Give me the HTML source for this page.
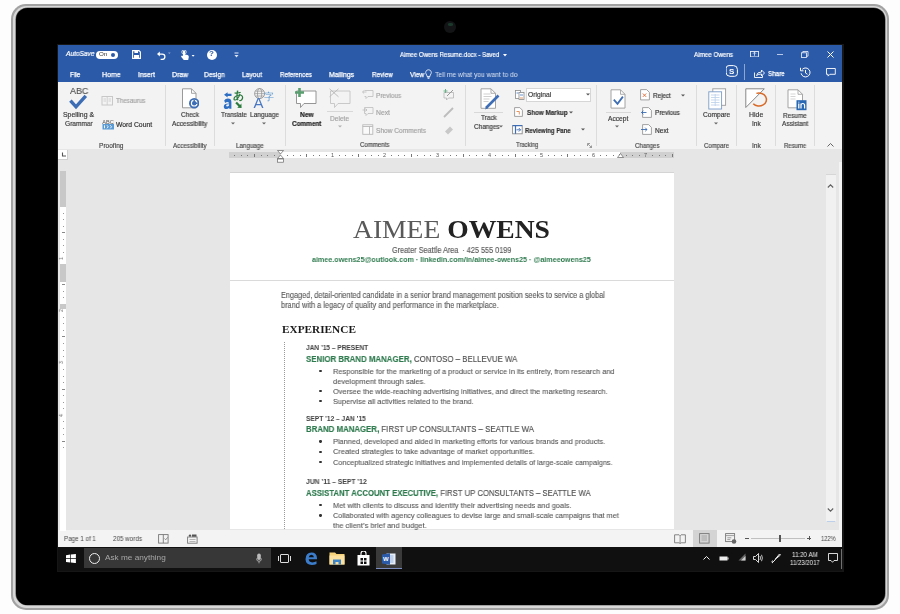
<!DOCTYPE html>
<html><head><meta charset="utf-8">
<style>
*{margin:0;padding:0;box-sizing:border-box}
html,body{width:900px;height:614px;overflow:hidden;background:#fdfdfd;font-family:"Liberation Sans",sans-serif}
.a{position:absolute}
.t{position:absolute;white-space:nowrap;line-height:1;will-change:transform}
b{font-weight:bold}
#frame{left:11.4px;top:3.9px;width:877.8px;height:605.7px;border-radius:15px;background:#a2a2a2}
#frame2{left:13.3px;top:5.5px;width:873.9px;height:602px;border-radius:13.5px;background:#d8d8d8}
#bezel{left:16px;top:7.5px;width:869px;height:597.8px;border-radius:11.5px;background:#000;box-shadow:0 0 0 0.6px #6a6a6a}
#screen{left:57px;top:44px;width:787px;height:528px;background:#161616}
#scr{left:58px;top:45px;width:784px;height:526px;overflow:hidden;background:#e6e6e6}
#w{left:-58px;top:-45px;width:900px;height:614px}
</style></head><body>
<div id="frame" class="a"></div>
<div id="frame2" class="a"></div>
<div id="bezel" class="a"></div>
<div class="a" style="left:444px;top:20.6px;width:12px;height:12px;border-radius:50%;background:#121416"></div><div class="a" style="left:448px;top:23.2px;width:4.5px;height:2.6px;border-radius:50%;background:#1c3a2c"></div>
<div id="screen" class="a"></div>
<div id="scr" class="a"><div id="w" class="a">
<div class="a" style="left:58px;top:45px;width:784px;height:37px;background:#2b5aa8"></div>
<div class="a" style="left:58px;top:82px;width:784px;height:67px;background:#f3f3f3"></div>
<div class="a" style="left:229.5px;top:172px;width:444px;height:357px;background:#fff"></div>
<div class="a" style="left:58px;top:529.5px;width:784px;height:17.5px;background:#f3f3f3"></div>
<div class="t" id="k17baa34a37" style="left:65.60px;top:51.46px;font-size:6.8px;color:#fff;font-style:italic;-webkit-text-stroke:0.2px #fff;transform:scaleX(0.9659);transform-origin:0 0;">AutoSave</div>
<div class="a" style="left:96px;top:50.5px;width:21.5px;height:8.5px;border-radius:4.5px;background:#fff"></div>
<div class="t" style="left:99.30px;top:51.48px;font-size:6.2px;color:#333;">On</div>
<div class="a" style="left:110.5px;top:52.5px;width:4.5px;height:4.5px;border-radius:50%;background:#2b5aa8"></div>
<svg class="a" style="left:131.5px;top:50px" width="9" height="9" viewBox="0 0 9 9"><path d="M0.6 0.6h6.4l1.4 1.4v6.4h-7.8z" fill="none" stroke="#fff" stroke-width="1.1"/><rect x="2.4" y="0.6" width="3.6" height="2.4" fill="#fff"/><rect x="2" y="5" width="5" height="3.4" fill="#fff"/></svg>
<svg class="a" style="left:157.2px;top:50.5px" width="14" height="9" viewBox="0 0 14 9"><path d="M2 3h3.2a2.7 2.7 0 0 1 0 5.4h-1.6" fill="none" stroke="#fff" stroke-width="1.25"/><path d="M0 3l2.8-2.6v5.2z" fill="#fff"/><path d="M11 1.6h2.6l-1.3 1.4z" fill="#8fa5d0"/></svg>
<svg class="a" style="left:180.2px;top:49.5px" width="16" height="11" viewBox="0 0 16 11"><path d="M3 5.5v-4a1 1 0 0 1 2 0v3l2.5 0.5q1.5 0.4 1.3 2l-0.6 3h-4.4l-2.5-3a0.9 0.9 0 0 1 1.5-1z" fill="#fff"/><circle cx="4" cy="2" r="2.2" fill="none" stroke="#fff" stroke-width="0.8"/><path d="M11.6 5.1h3l-1.5 1.6z" fill="#fff"/></svg>
<div class="a" style="left:206.5px;top:49.5px;width:10px;height:10px;border-radius:50%;background:#fff"></div>
<div class="t" style="left:209.20px;top:50.44px;font-size:8px;color:#2b5aa8;font-weight:bold;">?</div>
<svg class="a" style="left:233.5px;top:51.5px" width="5" height="6" viewBox="0 0 5 6"><rect x="0.5" y="0.5" width="4" height="1" fill="#dfe6f3"/><path d="M0.5 3h4l-2 2.5z" fill="#dfe6f3"/></svg>
<div class="t" id="k7e3c73c099" style="left:400.40px;top:51.36px;font-size:7.0px;color:#fff;-webkit-text-stroke:0.2px #fff;transform:scaleX(0.8681);transform-origin:0 0;">Aimee Owens Resume.docx  -  Saved</div>
<svg class="a" style="left:502.5px;top:53.5px" width="4" height="3" viewBox="0 0 4 3"><path d="M0 0h4l-2 2.5z" fill="#fff"/></svg>
<div class="t" id="kad0815792b" style="left:694.20px;top:51.36px;font-size:7.0px;color:#fff;-webkit-text-stroke:0.2px #fff;transform:scaleX(0.8949);transform-origin:0 0;">Aimee Owens</div>
<svg class="a" style="left:750.2px;top:50.8px" width="9" height="6.5" viewBox="0 0 9 6.5"><rect x="0.5" y="0.5" width="8" height="5.4" fill="none" stroke="#e8eef8" stroke-width="0.9"/><path d="M4.5 1.2v3.6M3 2.7l1.5-1.5 1.5 1.5" fill="none" stroke="#e8eef8" stroke-width="0.8"/></svg>
<div class="a" style="left:777px;top:53.8px;width:6px;height:1px;background:#b9c8e6"></div>
<svg class="a" style="left:801px;top:50.8px" width="7.5" height="7" viewBox="0 0 7.5 7"><rect x="0.5" y="1.8" width="5" height="4.7" fill="none" stroke="#e8eef8" stroke-width="0.85"/><path d="M1.8 1.8V0.5h5.2v4.7H5.5" fill="none" stroke="#e8eef8" stroke-width="0.85"/></svg>
<svg class="a" style="left:826.6px;top:50.6px" width="7" height="7" viewBox="0 0 7 7"><path d="M0.5 0.5l6 6M6.5 0.5l-6 6" stroke="#fff" stroke-width="1"/></svg>
<div class="t" id="kd5f7c191c1" style="left:70.20px;top:71.26px;font-size:7.2px;color:#fff;-webkit-text-stroke:0.25px #fff;transform:scaleX(0.8901);transform-origin:0 0;">File</div>
<div class="t" id="kb1c1edc522" style="left:102.00px;top:71.26px;font-size:7.2px;color:#fff;-webkit-text-stroke:0.25px #fff;transform:scaleX(0.9652);transform-origin:0 0;">Home</div>
<div class="t" id="k7739096b80" style="left:137.80px;top:71.26px;font-size:7.2px;color:#fff;-webkit-text-stroke:0.25px #fff;transform:scaleX(0.9408);transform-origin:0 0;">Insert</div>
<div class="t" id="k670a284139" style="left:171.80px;top:71.26px;font-size:7.2px;color:#fff;-webkit-text-stroke:0.25px #fff;transform:scaleX(0.9666);transform-origin:0 0;">Draw</div>
<div class="t" id="k342af5a0dd" style="left:204.00px;top:71.26px;font-size:7.2px;color:#fff;-webkit-text-stroke:0.25px #fff;transform:scaleX(0.9260);transform-origin:0 0;">Design</div>
<div class="t" id="ke1cec59cc8" style="left:242.20px;top:71.26px;font-size:7.2px;color:#fff;-webkit-text-stroke:0.25px #fff;transform:scaleX(0.9318);transform-origin:0 0;">Layout</div>
<div class="t" id="kd6c56615b6" style="left:280.00px;top:71.26px;font-size:7.2px;color:#fff;-webkit-text-stroke:0.25px #fff;transform:scaleX(0.8655);transform-origin:0 0;">References</div>
<div class="t" id="k54fa52f162" style="left:328.90px;top:71.26px;font-size:7.2px;color:#fff;-webkit-text-stroke:0.25px #fff;transform:scaleX(0.9524);transform-origin:0 0;">Mailings</div>
<div class="t" id="k63bd0ff7be" style="left:371.60px;top:71.26px;font-size:7.2px;color:#fff;-webkit-text-stroke:0.25px #fff;transform:scaleX(0.8788);transform-origin:0 0;">Review</div>
<div class="t" id="k5682ebab44" style="left:409.60px;top:71.26px;font-size:7.2px;color:#fff;-webkit-text-stroke:0.25px #fff;transform:scaleX(0.9137);transform-origin:0 0;">View</div>
<svg class="a" style="left:425px;top:68.5px" width="7" height="10" viewBox="0 0 7 10"><path d="M2 7.5q0-1.5-1-2.7a2.8 2.8 0 1 1 5 0q-1 1.2-1 2.7z" fill="none" stroke="#fff" stroke-width="0.8"/><path d="M2.3 8.6h2.4M2.6 9.5h1.8" stroke="#fff" stroke-width="0.7"/></svg>
<div class="t" id="kdb8320c83a" style="left:435.00px;top:71.26px;font-size:7.2px;color:#dbe3f1;transform:scaleX(0.9292);transform-origin:0 0;">Tell me what you want to do</div>
<svg class="a" style="left:726.4px;top:65.2px" width="12" height="12" viewBox="0 0 12 12"><path d="M3 0.6h4.5a3.9 3.9 0 0 1 3.9 3.9v4a2.8 2.8 0 0 1-2.8 2.8h-4.6a3.9 3.9 0 0 1-3.9-3.9v-4a2.8 2.8 0 0 1 2.9-2.8z" fill="none" stroke="#fff" stroke-width="1"/><text x="3.1" y="9.1" font-size="8" font-family="Liberation Sans" font-weight="bold" fill="#fff">S</text></svg>
<div class="a" style="left:744px;top:64px;width:1px;height:16px;background:#8ea6d2"></div>
<svg class="a" style="left:754px;top:68.5px" width="11" height="9" viewBox="0 0 11 9"><path d="M0.5 3.5v5h8v-2" fill="none" stroke="#fff" stroke-width="0.9"/><path d="M2.5 6.5q0.5-3.5 5-3.5v-2l3 3-3 3v-2q-3 0-5 1.5z" fill="none" stroke="#fff" stroke-width="0.9"/></svg>
<div class="t" id="k57a375aeab" style="left:767.70px;top:69.75px;font-size:7.4px;color:#fff;-webkit-text-stroke:0.25px #fff;transform:scaleX(0.8483);transform-origin:0 0;">Share</div>
<svg class="a" style="left:799.8px;top:67.2px" width="11" height="11" viewBox="0 0 11 11"><path d="M2.3 2.3a4.5 4.5 0 1 1-1.2 4" fill="none" stroke="#fff" stroke-width="1"/><path d="M0.5 0.8v3h3" fill="none" stroke="#fff" stroke-width="1"/><path d="M5.5 3v3l2 1.3" fill="none" stroke="#fff" stroke-width="1"/></svg>
<svg class="a" style="left:825.6px;top:67.6px" width="10" height="9" viewBox="0 0 10 9"><path d="M0.5 0.5h8.8v5.8h-5.4l-1.8 1.8v-1.8h-1.6z" fill="none" stroke="#fff" stroke-width="0.9"/></svg>
<div class="a" style="left:165.0px;top:85px;width:1px;height:61px;background:#dcdcdc"></div>
<div class="a" style="left:214.0px;top:85px;width:1px;height:61px;background:#dcdcdc"></div>
<div class="a" style="left:285.0px;top:85px;width:1px;height:61px;background:#dcdcdc"></div>
<div class="a" style="left:465.0px;top:85px;width:1px;height:61px;background:#dcdcdc"></div>
<div class="a" style="left:596.0px;top:85px;width:1px;height:61px;background:#dcdcdc"></div>
<div class="a" style="left:696.0px;top:85px;width:1px;height:61px;background:#dcdcdc"></div>
<div class="a" style="left:736.0px;top:85px;width:1px;height:61px;background:#dcdcdc"></div>
<div class="a" style="left:775.0px;top:85px;width:1px;height:61px;background:#dcdcdc"></div>
<div class="a" style="left:814.0px;top:85px;width:1px;height:61px;background:#dcdcdc"></div>
<div class="t" id="k8417831901" style="left:69.70px;top:87.42px;font-size:9.2px;color:#555;-webkit-text-stroke:0.18px #555;transform:scaleX(0.9690);transform-origin:0 0;">ABC</div>
<svg class="a" style="left:68px;top:94px" width="20" height="16" viewBox="0 0 20 16"><path d="M2.4 6.6l5.6 6.2 9.8-11" fill="none" stroke="#3d6db4" stroke-width="3.4" stroke-linejoin="miter"/></svg>
<div class="t" id="k8f213a7225" style="left:63.10px;top:112.27px;font-size:6.6px;color:#3c3c3c;-webkit-text-stroke:0.18px #3c3c3c;transform:scaleX(1.0457);transform-origin:0 0;">Spelling &amp;</div>
<div class="t" id="k9bbdb61a5f" style="left:65.00px;top:120.87px;font-size:6.6px;color:#3c3c3c;-webkit-text-stroke:0.18px #3c3c3c;transform:scaleX(0.9898);transform-origin:0 0;">Grammar</div>
<svg class="a" style="left:101px;top:94.5px" width="13" height="11" viewBox="0 0 13 11"><rect x="1" y="1.5" width="10.5" height="8.5" fill="none" stroke="#c8c8c8" stroke-width="1"/><path d="M6.2 1.5v8.5M2.5 4h2.5M2.5 6h2.5M7.5 4h2.5M7.5 6h2.5" stroke="#c8c8c8" stroke-width="0.8"/></svg>
<div class="t" id="kcfb2d3cc26" style="left:116.00px;top:98.47px;font-size:6.6px;color:#a4a4a4;-webkit-text-stroke:0.18px #a4a4a4;transform:scaleX(0.9456);transform-origin:0 0;">Thesaurus</div>
<svg class="a" style="left:101.5px;top:118px" width="13" height="12" viewBox="0 0 13 12"><text x="0.3" y="5.5" font-family="Liberation Sans" font-size="5.6" fill="#555">ABC</text><rect x="0.5" y="6" width="11.5" height="5.5" fill="#5b9bd5"/><path d="M2.5 7.3v3M5 7.3l1.2 1.5-1.2 1.5M8.3 7.3l1.2 1.5-1.2 1.5" fill="none" stroke="#fff" stroke-width="0.9"/></svg>
<div class="t" id="k4f58f2799f" style="left:115.50px;top:121.97px;font-size:6.6px;color:#333;-webkit-text-stroke:0.18px #333;transform:scaleX(1.0284);transform-origin:0 0;">Word Count</div>
<div class="t" id="kff6e57d329" style="left:99.00px;top:142.57px;font-size:6.4px;color:#4c4c4c;-webkit-text-stroke:0.18px #4c4c4c;transform:scaleX(1.0264);transform-origin:0 0;">Proofing</div>
<svg class="a" style="left:181px;top:88px" width="18" height="21" viewBox="0 0 18 21"><path d="M1.5 0.8h9l4.5 4.5v14.5h-13.5z" fill="#fff" stroke="#9a9a9a" stroke-width="1"/><path d="M10.5 0.8v4.5h4.5" fill="none" stroke="#9a9a9a" stroke-width="0.9"/><circle cx="13.2" cy="15.2" r="5.2" fill="#3d6db4"/><circle cx="13.2" cy="15.2" r="2.8" fill="none" stroke="#fff" stroke-width="1.1"/><path d="M13.2 11.8v3.4h3.4" fill="none" stroke="#3d6db4" stroke-width="1.4"/></svg>
<div class="t" id="k403319f1ce" style="left:181.00px;top:112.47px;font-size:6.6px;color:#3c3c3c;-webkit-text-stroke:0.18px #3c3c3c;transform:scaleX(0.9603);transform-origin:0 0;">Check</div>
<div class="t" id="kd3f88de8da" style="left:172.30px;top:121.27px;font-size:6.6px;color:#3c3c3c;-webkit-text-stroke:0.18px #3c3c3c;transform:scaleX(0.9844);transform-origin:0 0;">Accessibility</div>
<div class="t" id="ke215ae397a" style="left:173.00px;top:142.57px;font-size:6.4px;color:#4c4c4c;-webkit-text-stroke:0.18px #4c4c4c;transform:scaleX(0.9663);transform-origin:0 0;">Accessibility</div>
<svg class="a" style="left:223px;top:87.5px" width="21" height="22" viewBox="0 0 21 22"><path d="M1 6.8l3.6-2.6v1.6h3.9v2.2h-3.9v1.6z" fill="#2e6fc4"/><path d="M1.2 12.6q1.2-2 3.6-2 3.6 0 3.6 3.4v6.8h-2.2v-1q-1 1.3-2.8 1.3-2.6 0-2.6-2.6 0-3 4.6-3h0.8q0-1.5-1.7-1.5-1.3 0-2.4 0.9z M6.2 16.2h-0.8q-2.3 0-2.3 1.3 0 1 1.1 1 2 0 2-2.3z" fill="#2e6fc4" fill-rule="evenodd"/><text x="9.8" y="11" font-family="Liberation Sans" font-size="11" font-weight="bold" fill="#2a7a3e">&#12354;</text><path d="M18.6 20l-4.4-0.2 1.3-1.3-3.2-3.2 1.6-1.6 3.2 3.2 1.3-1.3z" fill="#2a7a3e"/></svg>
<div class="t" id="k620f335fba" style="left:220.70px;top:112.47px;font-size:6.6px;color:#3c3c3c;-webkit-text-stroke:0.18px #3c3c3c;transform:scaleX(0.9527);transform-origin:0 0;">Translate</div>
<svg class="a" style="left:231.4px;top:121.9px" width="4" height="3" viewBox="0 0 4 3"><path d="M0 0.5h4l-2 2z" fill="#666"/></svg>
<svg class="a" style="left:252px;top:88px" width="23" height="21" viewBox="0 0 23 21"><circle cx="7.6" cy="5.6" r="5" fill="none" stroke="#8a8a8a" stroke-width="0.8"/><ellipse cx="7.6" cy="5.6" rx="2.1" ry="5" fill="none" stroke="#8a8a8a" stroke-width="0.7"/><path d="M2.6 5.6h10M3.4 3.2h8.4M3.4 8h8.4" stroke="#8a8a8a" stroke-width="0.6"/><text x="1.6" y="19.6" font-family="Liberation Sans" font-size="15" fill="#4a78c4">A</text><text x="12.2" y="12" font-family="Liberation Sans" font-size="9.5" fill="#5b96d0">&#23383;</text></svg>
<div class="t" id="k5fb23977b5" style="left:249.90px;top:112.47px;font-size:6.6px;color:#3c3c3c;-webkit-text-stroke:0.18px #3c3c3c;transform:scaleX(0.9869);transform-origin:0 0;">Language</div>
<svg class="a" style="left:262px;top:121.9px" width="4" height="3" viewBox="0 0 4 3"><path d="M0 0.5h4l-2 2z" fill="#666"/></svg>
<div class="t" id="kfef24a5581" style="left:235.90px;top:142.57px;font-size:6.4px;color:#4c4c4c;-webkit-text-stroke:0.18px #4c4c4c;transform:scaleX(0.9720);transform-origin:0 0;">Language</div>
<svg class="a" style="left:295px;top:88px" width="24" height="21" viewBox="0 0 24 21"><path d="M1.5 3h19.5v12.5h-12l-3.5 4v-4h-4z" fill="#fff" stroke="#8a8a8a" stroke-width="0.9"/><path d="M4.5 0v9M0 4.5h9" stroke="#5a9e70" stroke-width="2.6"/></svg>
<div class="t" id="k3a620e6601" style="left:300.00px;top:112.36px;font-size:6.8px;color:#222;font-weight:bold;-webkit-text-stroke:0.18px #222;transform:scaleX(0.9639);transform-origin:0 0;">New</div>
<div class="t" id="k99bf45391f" style="left:291.90px;top:120.96px;font-size:6.8px;color:#222;font-weight:bold;-webkit-text-stroke:0.18px #222;transform:scaleX(0.9373);transform-origin:0 0;">Comment</div>
<svg class="a" style="left:327.5px;top:87.5px" width="24" height="21" viewBox="0 0 24 21"><path d="M2.5 3h19.5v12.5h-12l-3.5 4v-4h-4z" fill="none" stroke="#c4c4c4" stroke-width="0.9"/><path d="M1.5 0.8l9 8M10.5 0.8l-9 8" stroke="#b8b8b8" stroke-width="0.9"/></svg>
<div class="a" style="left:327px;top:111px;width:26px;height:1px;background:#d8d8d8"></div>
<div class="t" id="k73fb4159eb" style="left:330.00px;top:115.67px;font-size:6.6px;color:#a4a4a4;-webkit-text-stroke:0.18px #a4a4a4;transform:scaleX(0.9946);transform-origin:0 0;">Delete</div>
<svg class="a" style="left:338px;top:124.9px" width="4" height="3" viewBox="0 0 4 3"><path d="M0 0.5h4l-2 2z" fill="#b0b0b0"/></svg>
<svg class="a" style="left:362px;top:88.5px" width="12" height="11" viewBox="0 0 12 11"><path d="M2.5 1.5h8.5v6h-5l-2 2v-2h-1.5" fill="none" stroke="#bdbdbd" stroke-width="0.8"/><path d="M0.5 3h4M0.5 3l1.6-1.5M0.5 3l1.6 1.5" fill="none" stroke="#bdbdbd" stroke-width="0.8"/></svg>
<div class="t" id="k29019f56ca" style="left:375.70px;top:92.67px;font-size:6.6px;color:#a4a4a4;-webkit-text-stroke:0.18px #a4a4a4;transform:scaleX(0.9846);transform-origin:0 0;">Previous</div>
<svg class="a" style="left:362px;top:106px" width="12" height="11" viewBox="0 0 12 11"><path d="M2.5 1.5h8.5v6h-5l-2 2v-2h-1.5v-6" fill="none" stroke="#bdbdbd" stroke-width="0.8"/><path d="M0.5 4h4.5M5 4l-1.6-1.5M5 4l-1.6 1.5" fill="none" stroke="#bdbdbd" stroke-width="0.8"/></svg>
<div class="t" id="k5f182f436b" style="left:375.70px;top:110.27px;font-size:6.6px;color:#a4a4a4;-webkit-text-stroke:0.18px #a4a4a4;transform:scaleX(1.0293);transform-origin:0 0;">Next</div>
<svg class="a" style="left:362px;top:124px" width="12" height="11" viewBox="0 0 12 11"><rect x="0.8" y="0.8" width="10" height="9.5" fill="#fafafa" stroke="#b8b8b8" stroke-width="0.9"/><path d="M0.8 2.5h10M7.5 2.5v7.8" stroke="#b8b8b8" stroke-width="0.9"/></svg>
<div class="t" id="ke1823c9a7a" style="left:375.70px;top:127.67px;font-size:6.6px;color:#a4a4a4;-webkit-text-stroke:0.18px #a4a4a4;transform:scaleX(0.9948);transform-origin:0 0;">Show Comments</div>
<svg class="a" style="left:442.5px;top:88.5px" width="12" height="11" viewBox="0 0 12 11"><path d="M1 3.5h9.5v5.5h-5l-2 2v-2h-2.5z" fill="none" stroke="#b4b4b4" stroke-width="0.8"/><path d="M4 7l6-6" stroke="#999" stroke-width="1"/><path d="M2.5 0v4M0.5 2h4" stroke="#6fb08a" stroke-width="1"/></svg>
<svg class="a" style="left:443px;top:106.5px" width="11" height="11" viewBox="0 0 11 11"><path d="M1 10l9-9" stroke="#bdbdbd" stroke-width="1.8"/></svg>
<svg class="a" style="left:443.5px;top:124.5px" width="10" height="10" viewBox="0 0 10 10"><path d="M1 6.5l5-5 3 3-5 5z" fill="#c8c8c8"/></svg>
<div class="t" id="k11de3ec9b0" style="left:360.30px;top:142.37px;font-size:6.4px;color:#4c4c4c;-webkit-text-stroke:0.18px #4c4c4c;transform:scaleX(0.9493);transform-origin:0 0;">Comments</div>
<svg class="a" style="left:480px;top:88px" width="20" height="22" viewBox="0 0 20 22"><path d="M1 0.8h10l4.5 4.5v15h-14.5z" fill="#fff" stroke="#9a9a9a" stroke-width="0.9"/><path d="M11 0.8v4.5h4.5" fill="none" stroke="#9a9a9a" stroke-width="0.8"/><path d="M3.5 6h7M3.5 8.5h8M3.5 11h6M3.5 13.5h5" stroke="#c9c9c9" stroke-width="0.9"/><path d="M6 20l12.5-12.5" stroke="#3d6db4" stroke-width="2.6"/><path d="M5 21.5l1.2-2.8 1.6 1.6z" fill="#3d6db4"/></svg>
<div class="a" style="left:474px;top:112px;width:29px;height:1px;background:#d8d8d8"></div>
<div class="t" id="kb297d44549" style="left:480.70px;top:115.47px;font-size:6.6px;color:#3c3c3c;-webkit-text-stroke:0.18px #3c3c3c;transform:scaleX(0.9637);transform-origin:0 0;">Track</div>
<div class="t" id="ka92f11b8d6" style="left:473.70px;top:124.17px;font-size:6.6px;color:#3c3c3c;-webkit-text-stroke:0.18px #3c3c3c;transform:scaleX(0.9717);transform-origin:0 0;">Changes</div>
<svg class="a" style="left:499.4px;top:125.1px" width="4" height="3" viewBox="0 0 4 3"><path d="M0 0.5h4l-2 2z" fill="#666"/></svg>
<svg class="a" style="left:514.5px;top:89.5px" width="10" height="10" viewBox="0 0 10 10"><rect x="0.5" y="0.5" width="5" height="8" fill="#fff" stroke="#8a8a8a" stroke-width="0.8"/><rect x="4" y="2.5" width="5" height="7" fill="#fff" stroke="#8a8a8a" stroke-width="0.8"/><path d="M1.5 3h2M5 5h3" stroke="#3d78c8" stroke-width="0.8"/><path d="M5 8h3" stroke="#e07b39" stroke-width="0.8"/></svg>
<div class="a" style="left:525.5px;top:87.7px;width:65.5px;height:14.5px;background:#fff;border:1px solid #d6d6d6"></div>
<div class="t" id="ke499ab6061" style="left:527.70px;top:92.27px;font-size:6.6px;color:#3c3c3c;-webkit-text-stroke:0.18px #3c3c3c;transform:scaleX(1.0187);transform-origin:0 0;">Original</div>
<svg class="a" style="left:586px;top:93.1px" width="4" height="3" viewBox="0 0 4 3"><path d="M0 0.5h4l-2 2z" fill="#555"/></svg>
<svg class="a" style="left:514px;top:107px" width="9" height="10" viewBox="0 0 9 10"><path d="M0.6 0.6h5.2l2.6 2.6v6.2h-7.8z" fill="#fff" stroke="#8a8a8a" stroke-width="0.8"/><path d="M2.5 4.5h2.8v3" fill="none" stroke="#e07b39" stroke-width="0.8"/></svg>
<div class="t" id="kae79322226" style="left:526.50px;top:110.27px;font-size:6.6px;color:#333;font-weight:bold;-webkit-text-stroke:0.18px #333;transform:scaleX(0.9507);transform-origin:0 0;">Show Markup</div>
<svg class="a" style="left:568.8px;top:111.1px" width="4" height="3" viewBox="0 0 4 3"><path d="M0 0.5h4l-2 2z" fill="#555"/></svg>
<svg class="a" style="left:511.5px;top:125px" width="11" height="9.5" viewBox="0 0 11 9.5"><rect x="0.6" y="0.6" width="9.6" height="8.2" fill="#fff" stroke="#8a8a8a" stroke-width="0.9"/><path d="M3.5 0.6v8.2" stroke="#3d6db4" stroke-width="1.2"/><path d="M0.6 0.6h9.6" stroke="#3d6db4" stroke-width="1.2"/><path d="M4.5 4.8h4M6.8 3l1.8 1.8-1.8 1.8" fill="none" stroke="#3d6db4" stroke-width="0.9"/></svg>
<div class="t" id="k16afb42cae" style="left:525.00px;top:127.57px;font-size:6.6px;color:#333;font-weight:bold;-webkit-text-stroke:0.18px #333;transform:scaleX(0.9092);transform-origin:0 0;">Reviewing Pane</div>
<svg class="a" style="left:581.4px;top:128.3px" width="4" height="3" viewBox="0 0 4 3"><path d="M0 0.5h4l-2 2z" fill="#555"/></svg>
<div class="t" id="k72ea05d9f2" style="left:516.00px;top:142.37px;font-size:6.4px;color:#4c4c4c;-webkit-text-stroke:0.18px #4c4c4c;transform:scaleX(0.9201);transform-origin:0 0;">Tracking</div>
<svg class="a" style="left:587px;top:142.5px" width="5" height="5" viewBox="0 0 5 5"><path d="M0.5 0.5h2.5M0.5 0.5v2.5M1 1l3.5 3.5M4.5 2.5v2h-2" fill="none" stroke="#777" stroke-width="0.7"/></svg>
<svg class="a" style="left:610px;top:88.5px" width="16" height="20" viewBox="0 0 16 20"><path d="M1 0.8h9.5l4.5 4.5v13.8h-14z" fill="#fff" stroke="#9a9a9a" stroke-width="0.9"/><path d="M10.5 0.8v4.5h4.5" fill="none" stroke="#9a9a9a" stroke-width="0.8"/><path d="M3.8 10.6l3.7 4.2 5.4-7.2" fill="none" stroke="#3d6db4" stroke-width="1.8"/></svg>
<div class="a" style="left:606px;top:111.5px;width:24.5px;height:1px;background:#d8d8d8"></div>
<div class="t" id="k4cea4e61a1" style="left:607.80px;top:115.87px;font-size:6.6px;color:#3c3c3c;-webkit-text-stroke:0.18px #3c3c3c;transform:scaleX(1.0044);transform-origin:0 0;">Accept</div>
<svg class="a" style="left:615.4px;top:125.1px" width="4" height="3" viewBox="0 0 4 3"><path d="M0 0.5h4l-2 2z" fill="#666"/></svg>
<svg class="a" style="left:639.5px;top:89px" width="10" height="11.5" viewBox="0 0 10 11.5"><path d="M0.6 0.6h6l2.8 2.8v7.5h-8.8z" fill="#fff" stroke="#8a8a8a" stroke-width="0.8"/><path d="M2.8 4.5l3.4 3.4M6.2 4.5l-3.4 3.4" stroke="#e0632b" stroke-width="0.9"/></svg>
<div class="t" id="kca6874fea9" style="left:653.00px;top:92.67px;font-size:6.6px;color:#333;-webkit-text-stroke:0.18px #333;transform:scaleX(0.9549);transform-origin:0 0;">Reject</div>
<svg class="a" style="left:681px;top:93.7px" width="4" height="3" viewBox="0 0 4 3"><path d="M0 0.5h4l-2 2z" fill="#555"/></svg>
<svg class="a" style="left:641px;top:106.5px" width="11" height="11" viewBox="0 0 11 11"><path d="M1.6 0.6h6l2.8 2.8v7h-8.8z" fill="#fff" stroke="#8a8a8a" stroke-width="0.8"/><path d="M0.5 5.5h5M0.5 5.5l1.8-1.8M0.5 5.5l1.8 1.8" fill="none" stroke="#3d6db4" stroke-width="0.9"/></svg>
<div class="t" id="k590ff5d0f3" style="left:654.90px;top:110.17px;font-size:6.6px;color:#333;-webkit-text-stroke:0.18px #333;transform:scaleX(0.9690);transform-origin:0 0;">Previous</div>
<svg class="a" style="left:641px;top:124px" width="11" height="11" viewBox="0 0 11 11"><path d="M1.6 0.6h6l2.8 2.8v7h-8.8z" fill="#fff" stroke="#8a8a8a" stroke-width="0.8"/><path d="M0 5.5h6M6 5.5l-1.8-1.8M6 5.5l-1.8 1.8" fill="none" stroke="#3d6db4" stroke-width="0.9"/></svg>
<div class="t" id="kedcf47a56c" style="left:654.90px;top:127.57px;font-size:6.6px;color:#333;-webkit-text-stroke:0.18px #333;transform:scaleX(0.9924);transform-origin:0 0;">Next</div>
<div class="t" id="kad9bd24872" style="left:634.70px;top:142.57px;font-size:6.4px;color:#4c4c4c;-webkit-text-stroke:0.18px #4c4c4c;transform:scaleX(0.9588);transform-origin:0 0;">Changes</div>
<svg class="a" style="left:707.5px;top:87.5px" width="19" height="22" viewBox="0 0 19 22"><rect x="4.8" y="0.8" width="12.8" height="16.5" fill="#fff" stroke="#9a9a9a" stroke-width="0.9"/><rect x="0.8" y="3.8" width="12.8" height="17.2" fill="#fff" stroke="#7a9cc8" stroke-width="0.9"/><path d="M3 7h8.5M3 9.5h8.5M3 12h8.5M3 14.5h8.5M3 17h8.5M7.2 6v12" stroke="#b9cfe8" stroke-width="0.8"/></svg>
<div class="t" id="k7209b320b9" style="left:703.00px;top:112.47px;font-size:6.6px;color:#3c3c3c;-webkit-text-stroke:0.18px #3c3c3c;transform:scaleX(1.0050);transform-origin:0 0;">Compare</div>
<svg class="a" style="left:714.3px;top:121.9px" width="4" height="3" viewBox="0 0 4 3"><path d="M0 0.5h4l-2 2z" fill="#666"/></svg>
<div class="t" id="ke14606fc5c" style="left:704.40px;top:142.57px;font-size:6.4px;color:#4c4c4c;-webkit-text-stroke:0.18px #4c4c4c;transform:scaleX(0.9522);transform-origin:0 0;">Compare</div>
<svg class="a" style="left:744.5px;top:88px" width="23" height="21" viewBox="0 0 23 21"><path d="M0.8 0.8h18.5l-18.5 18.7z" fill="#fff" stroke="#7a7a7a" stroke-width="0.9"/><path d="M11.4 5.4A7.5 6.5 0 1 1 8.25 15.7" fill="none" stroke="#d86a28" stroke-width="1.5"/></svg>
<div class="t" id="kb185ceb765" style="left:749.00px;top:112.47px;font-size:6.6px;color:#3c3c3c;-webkit-text-stroke:0.18px #3c3c3c;transform:scaleX(1.0514);transform-origin:0 0;">Hide</div>
<div class="t" id="k742c54b73b" style="left:752.00px;top:120.97px;font-size:6.6px;color:#3c3c3c;-webkit-text-stroke:0.18px #3c3c3c;transform:scaleX(0.9958);transform-origin:0 0;">Ink</div>
<div class="t" id="k70abf92c3a" style="left:752.20px;top:142.57px;font-size:6.4px;color:#4c4c4c;-webkit-text-stroke:0.18px #4c4c4c;transform:scaleX(1.0479);transform-origin:0 0;">Ink</div>
<svg class="a" style="left:786.5px;top:88.5px" width="21" height="22" viewBox="0 0 21 22"><path d="M1 0.8h10l4.5 4.5v13.5h-14.5z" fill="#fff" stroke="#9a9a9a" stroke-width="0.9"/><path d="M11 0.8v4.5h4.5" fill="none" stroke="#9a9a9a" stroke-width="0.8"/><path d="M3.5 5h5M3.5 7.5h5M3.5 10h5" stroke="#d0d0d0" stroke-width="0.9"/><rect x="9.5" y="11.2" width="10" height="10" fill="#2867b2"/><path d="M11.8 14.5v5M11.8 12.8v0.8" stroke="#fff" stroke-width="1.3"/><path d="M14 19.5v-5M14 16.5q0-2 1.8-2t1.8 2v3" fill="none" stroke="#fff" stroke-width="1.2"/></svg>
<div class="t" id="k8d5b5f9a8d" style="left:783.00px;top:112.67px;font-size:6.6px;color:#3c3c3c;-webkit-text-stroke:0.18px #3c3c3c;transform:scaleX(0.9633);transform-origin:0 0;">Resume</div>
<div class="t" id="kb6d0538533" style="left:781.60px;top:120.97px;font-size:6.6px;color:#3c3c3c;-webkit-text-stroke:0.18px #3c3c3c;transform:scaleX(0.9774);transform-origin:0 0;">Assistant</div>
<div class="t" id="k4aa9794260" style="left:783.80px;top:142.57px;font-size:6.4px;color:#4c4c4c;-webkit-text-stroke:0.18px #4c4c4c;transform:scaleX(0.9346);transform-origin:0 0;">Resume</div>
<svg class="a" style="left:827px;top:143px" width="7" height="4" viewBox="0 0 7 4"><path d="M0.5 3.5l3-3 3 3" fill="none" stroke="#555" stroke-width="0.9"/></svg>
<div class="a" style="left:58px;top:150px;width:10px;height:9.5px;background:#fff;border-right:1px solid #d0d0d0;border-bottom:1px solid #d0d0d0"></div>
<svg class="a" style="left:60.5px;top:151.5px" width="6" height="6" viewBox="0 0 6 6"><path d="M1.5 0.5v3.5h3.5" fill="none" stroke="#555" stroke-width="1.1"/></svg>
<div class="a" style="left:228.5px;top:152.3px;width:445px;height:5.4px;background:#d0d0d0"></div>
<div class="a" style="left:280.5px;top:152.3px;width:339px;height:5.4px;background:#fff"></div>
<div class="a" style="left:234.42px;top:154.6px;width:0.8px;height:0.9px;background:#777"></div><div class="a" style="left:240.95px;top:154.6px;width:0.8px;height:0.9px;background:#777"></div><div class="a" style="left:247.47px;top:154.6px;width:0.8px;height:0.9px;background:#777"></div><div class="a" style="left:254.00px;top:153.5px;width:0.8px;height:3px;background:#777"></div><div class="a" style="left:260.53px;top:154.6px;width:0.8px;height:0.9px;background:#777"></div><div class="a" style="left:267.05px;top:154.6px;width:0.8px;height:0.9px;background:#777"></div><div class="a" style="left:273.58px;top:154.6px;width:0.8px;height:0.9px;background:#777"></div><div class="a" style="left:286.62px;top:154.6px;width:0.8px;height:0.9px;background:#777"></div><div class="a" style="left:293.15px;top:154.6px;width:0.8px;height:0.9px;background:#777"></div><div class="a" style="left:299.68px;top:154.6px;width:0.8px;height:0.9px;background:#777"></div><div class="a" style="left:306.20px;top:153.5px;width:0.8px;height:3px;background:#777"></div><div class="a" style="left:312.73px;top:154.6px;width:0.8px;height:0.9px;background:#777"></div><div class="a" style="left:319.25px;top:154.6px;width:0.8px;height:0.9px;background:#777"></div><div class="a" style="left:325.78px;top:154.6px;width:0.8px;height:0.9px;background:#777"></div><div class="t" style="left:331.10px;top:152.6px;font-size:5.5px;color:#555">1</div><div class="a" style="left:338.83px;top:154.6px;width:0.8px;height:0.9px;background:#777"></div><div class="a" style="left:345.35px;top:154.6px;width:0.8px;height:0.9px;background:#777"></div><div class="a" style="left:351.88px;top:154.6px;width:0.8px;height:0.9px;background:#777"></div><div class="a" style="left:358.40px;top:153.5px;width:0.8px;height:3px;background:#777"></div><div class="a" style="left:364.93px;top:154.6px;width:0.8px;height:0.9px;background:#777"></div><div class="a" style="left:371.45px;top:154.6px;width:0.8px;height:0.9px;background:#777"></div><div class="a" style="left:377.98px;top:154.6px;width:0.8px;height:0.9px;background:#777"></div><div class="t" style="left:383.30px;top:152.6px;font-size:5.5px;color:#555">2</div><div class="a" style="left:391.03px;top:154.6px;width:0.8px;height:0.9px;background:#777"></div><div class="a" style="left:397.55px;top:154.6px;width:0.8px;height:0.9px;background:#777"></div><div class="a" style="left:404.08px;top:154.6px;width:0.8px;height:0.9px;background:#777"></div><div class="a" style="left:410.60px;top:153.5px;width:0.8px;height:3px;background:#777"></div><div class="a" style="left:417.12px;top:154.6px;width:0.8px;height:0.9px;background:#777"></div><div class="a" style="left:423.65px;top:154.6px;width:0.8px;height:0.9px;background:#777"></div><div class="a" style="left:430.18px;top:154.6px;width:0.8px;height:0.9px;background:#777"></div><div class="t" style="left:435.50px;top:152.6px;font-size:5.5px;color:#555">3</div><div class="a" style="left:443.23px;top:154.6px;width:0.8px;height:0.9px;background:#777"></div><div class="a" style="left:449.75px;top:154.6px;width:0.8px;height:0.9px;background:#777"></div><div class="a" style="left:456.28px;top:154.6px;width:0.8px;height:0.9px;background:#777"></div><div class="a" style="left:462.80px;top:153.5px;width:0.8px;height:3px;background:#777"></div><div class="a" style="left:469.33px;top:154.6px;width:0.8px;height:0.9px;background:#777"></div><div class="a" style="left:475.85px;top:154.6px;width:0.8px;height:0.9px;background:#777"></div><div class="a" style="left:482.38px;top:154.6px;width:0.8px;height:0.9px;background:#777"></div><div class="t" style="left:487.70px;top:152.6px;font-size:5.5px;color:#555">4</div><div class="a" style="left:495.43px;top:154.6px;width:0.8px;height:0.9px;background:#777"></div><div class="a" style="left:501.95px;top:154.6px;width:0.8px;height:0.9px;background:#777"></div><div class="a" style="left:508.48px;top:154.6px;width:0.8px;height:0.9px;background:#777"></div><div class="a" style="left:515.00px;top:153.5px;width:0.8px;height:3px;background:#777"></div><div class="a" style="left:521.52px;top:154.6px;width:0.8px;height:0.9px;background:#777"></div><div class="a" style="left:528.05px;top:154.6px;width:0.8px;height:0.9px;background:#777"></div><div class="a" style="left:534.58px;top:154.6px;width:0.8px;height:0.9px;background:#777"></div><div class="t" style="left:539.90px;top:152.6px;font-size:5.5px;color:#555">5</div><div class="a" style="left:547.63px;top:154.6px;width:0.8px;height:0.9px;background:#777"></div><div class="a" style="left:554.15px;top:154.6px;width:0.8px;height:0.9px;background:#777"></div><div class="a" style="left:560.68px;top:154.6px;width:0.8px;height:0.9px;background:#777"></div><div class="a" style="left:567.20px;top:153.5px;width:0.8px;height:3px;background:#777"></div><div class="a" style="left:573.73px;top:154.6px;width:0.8px;height:0.9px;background:#777"></div><div class="a" style="left:580.25px;top:154.6px;width:0.8px;height:0.9px;background:#777"></div><div class="a" style="left:586.77px;top:154.6px;width:0.8px;height:0.9px;background:#777"></div><div class="t" style="left:592.10px;top:152.6px;font-size:5.5px;color:#555">6</div><div class="a" style="left:599.83px;top:154.6px;width:0.8px;height:0.9px;background:#777"></div><div class="a" style="left:606.35px;top:154.6px;width:0.8px;height:0.9px;background:#777"></div><div class="a" style="left:612.88px;top:154.6px;width:0.8px;height:0.9px;background:#777"></div><div class="a" style="left:619.40px;top:153.5px;width:0.8px;height:3px;background:#777"></div><div class="a" style="left:625.93px;top:154.6px;width:0.8px;height:0.9px;background:#777"></div><div class="a" style="left:632.45px;top:154.6px;width:0.8px;height:0.9px;background:#777"></div><div class="a" style="left:638.98px;top:154.6px;width:0.8px;height:0.9px;background:#777"></div><div class="t" style="left:644.30px;top:152.6px;font-size:5.5px;color:#555">7</div><div class="a" style="left:652.02px;top:154.6px;width:0.8px;height:0.9px;background:#777"></div><div class="a" style="left:658.55px;top:154.6px;width:0.8px;height:0.9px;background:#777"></div><div class="a" style="left:665.08px;top:154.6px;width:0.8px;height:0.9px;background:#777"></div><div class="a" style="left:671.60px;top:153.5px;width:0.8px;height:3px;background:#777"></div>
<svg class="a" style="left:277px;top:149.5px" width="7" height="13" viewBox="0 0 7 13"><path d="M0.5 0.5h6l-3 3.5z" fill="#fff" stroke="#666" stroke-width="0.7"/><path d="M3.5 5l3 3.5h-6z" fill="#fff" stroke="#666" stroke-width="0.7"/><rect x="0.5" y="9" width="6" height="3.2" fill="#fff" stroke="#666" stroke-width="0.7"/></svg>
<svg class="a" style="left:617px;top:153px" width="7" height="6" viewBox="0 0 7 6"><path d="M3.5 0.5l3 4h-6z" fill="#fff" stroke="#666" stroke-width="0.7"/></svg>
<div class="a" style="left:59.8px;top:171px;width:6.4px;height:360px;background:#fff"></div>
<div class="a" style="left:59.8px;top:171px;width:6.4px;height:36px;background:#c8c8c8"></div>
<div class="a" style="left:59.8px;top:264px;width:6.4px;height:17.5px;background:#c8c8c8"></div>
<div class="a" style="left:59.8px;top:303.7px;width:6.4px;height:5.300000000000011px;background:#c8c8c8"></div>
<div class="a" style="left:62.5px;top:212.53px;width:1px;height:0.8px;background:#999"></div><div class="a" style="left:62.5px;top:219.05px;width:1px;height:0.8px;background:#999"></div><div class="a" style="left:62.5px;top:225.58px;width:1px;height:0.8px;background:#999"></div><div class="a" style="left:61.5px;top:232.00px;width:3px;height:1px;background:#888"></div><div class="a" style="left:62.5px;top:238.63px;width:1px;height:0.8px;background:#999"></div><div class="a" style="left:62.5px;top:245.15px;width:1px;height:0.8px;background:#999"></div><div class="a" style="left:62.5px;top:251.68px;width:1px;height:0.8px;background:#999"></div><div class="t" style="left:60.3px;top:256.00px;font-size:5px;color:#666;transform:rotate(-90deg)">1</div><div class="a" style="left:61.5px;top:284.20px;width:3px;height:1px;background:#888"></div><div class="a" style="left:62.5px;top:290.83px;width:1px;height:0.8px;background:#999"></div><div class="a" style="left:62.5px;top:297.35px;width:1px;height:0.8px;background:#999"></div><div class="t" style="left:60.3px;top:308.20px;font-size:5px;color:#666;transform:rotate(-90deg)">2</div><div class="a" style="left:62.5px;top:316.93px;width:1px;height:0.8px;background:#999"></div><div class="a" style="left:62.5px;top:323.45px;width:1px;height:0.8px;background:#999"></div><div class="a" style="left:62.5px;top:329.98px;width:1px;height:0.8px;background:#999"></div><div class="a" style="left:61.5px;top:336.40px;width:3px;height:1px;background:#888"></div><div class="a" style="left:62.5px;top:343.03px;width:1px;height:0.8px;background:#999"></div><div class="a" style="left:62.5px;top:349.55px;width:1px;height:0.8px;background:#999"></div><div class="a" style="left:62.5px;top:356.08px;width:1px;height:0.8px;background:#999"></div><div class="t" style="left:60.3px;top:360.40px;font-size:5px;color:#666;transform:rotate(-90deg)">3</div><div class="a" style="left:62.5px;top:369.13px;width:1px;height:0.8px;background:#999"></div><div class="a" style="left:62.5px;top:375.65px;width:1px;height:0.8px;background:#999"></div><div class="a" style="left:62.5px;top:382.18px;width:1px;height:0.8px;background:#999"></div><div class="a" style="left:61.5px;top:388.60px;width:3px;height:1px;background:#888"></div><div class="a" style="left:62.5px;top:395.23px;width:1px;height:0.8px;background:#999"></div><div class="a" style="left:62.5px;top:401.75px;width:1px;height:0.8px;background:#999"></div><div class="a" style="left:62.5px;top:408.28px;width:1px;height:0.8px;background:#999"></div><div class="t" style="left:60.3px;top:412.60px;font-size:5px;color:#666;transform:rotate(-90deg)">4</div><div class="a" style="left:62.5px;top:421.33px;width:1px;height:0.8px;background:#999"></div><div class="a" style="left:62.5px;top:427.85px;width:1px;height:0.8px;background:#999"></div><div class="a" style="left:62.5px;top:434.38px;width:1px;height:0.8px;background:#999"></div><div class="a" style="left:61.5px;top:440.80px;width:3px;height:1px;background:#888"></div><div class="a" style="left:62.5px;top:447.43px;width:1px;height:0.8px;background:#999"></div>
<div class="a" style="left:826.3px;top:174px;width:9.6px;height:347px;background:#f1f1f1;border-top:1px solid #d6d6d6"></div>
<div class="a" style="left:839px;top:162px;width:3px;height:368px;background:#f4f4f4"></div>
<svg class="a" style="left:826.9px;top:184.3px" width="7" height="4" viewBox="0 0 7 4"><path d="M0.8 3.5l2.7-2.7 2.7 2.7" fill="none" stroke="#606060" stroke-width="1.1"/></svg>
<svg class="a" style="left:826.9px;top:508px" width="7" height="4" viewBox="0 0 7 4"><path d="M0.8 0.5l2.7 2.7 2.7-2.7" fill="none" stroke="#606060" stroke-width="1.1"/></svg>
<div class="a" style="left:826.5px;top:520.5px;width:8px;height:0.8px;background:#bcd0ec"></div>
<div class="a" style="left:229.5px;top:171.5px;width:444px;height:1px;background:#d4d4d4"></div>
<div class="a" style="left:229.5px;top:280px;width:444px;height:1px;background:#dadada"></div>
<div class="t" id="k6a091694df" style="left:352.80px;top:217.08px;font-size:26px;color:#595959;font-family:'Liberation Serif',serif;transform:scaleX(1.0607);transform-origin:0 0;">AIMEE <b style="color:#222">OWENS</b></div>
<div class="t" id="k2c8ccf1b43" style="left:391.70px;top:245.53px;font-size:8.4px;color:#5a5a5a;-webkit-text-stroke:0.15px #5a5a5a;transform:scaleX(0.8688);transform-origin:0 0;">Greater Seattle Area &nbsp;&middot; 425 555 0199</div>
<div class="t" id="k5bf5d0040a" style="left:312.00px;top:255.69px;font-size:7.9px;color:#2e7a4e;font-weight:bold;transform:scaleX(0.9055);transform-origin:0 0;">aimee.owens25@outlook.com &middot; linkedin.com/in/aimee-owens25 &middot; @aimeeowens25</div>
<div class="t" id="k91f05505e4" style="left:281.20px;top:291.02px;font-size:8.8px;color:#555;-webkit-text-stroke:0.1px #555;transform:scaleX(0.8310);transform-origin:0 0;">Engaged, detail-oriented candidate in a senior brand management position seeks to service a global</div>
<div class="t" id="kdc38cd3a71" style="left:281.20px;top:301.32px;font-size:8.8px;color:#555;-webkit-text-stroke:0.1px #555;transform:scaleX(0.8399);transform-origin:0 0;">brand with a legacy of quality and performance in the marketplace.</div>
<div class="t" id="k552d580afd" style="left:282.00px;top:325.24px;font-size:10.3px;color:#1a1a1a;font-family:'Liberation Serif',serif;font-weight:bold;transform:scaleX(1.0950);transform-origin:0 0;">EXPERIENCE</div>
<div class="a" style="left:284px;top:342px;width:0;height:187px;border-left:1px dotted #999"></div>
<div class="t" id="kdc89d00192" style="left:306.20px;top:345.41px;font-size:7.1px;color:#404040;font-weight:bold;transform:scaleX(0.9227);transform-origin:0 0;">JAN &rsquo;15 &ndash; PRESENT</div>
<div class="t" id="kc353b9f3d8" style="left:306.20px;top:354.31px;font-size:9.4px;color:#505050;-webkit-text-stroke:0.15px currentColor;transform:scaleX(0.8386);transform-origin:0 0;"><b style="color:#2e7a4e">SENIOR BRAND MANAGER,</b> CONTOSO &ndash; BELLEVUE WA</div>
<div class="a" style="left:319.3px;top:370.10px;width:2.3px;height:2.3px;border-radius:50%;background:#333"></div>
<div class="t" id="kb7c0e5ed2f" style="left:332.50px;top:367.84px;font-size:8.0px;color:#555;-webkit-text-stroke:0.1px #555;transform:scaleX(0.9277);transform-origin:0 0;">Responsible for the marketing of a product or service in its entirety, from research and</div>
<div class="t" id="k080044a094" style="left:332.50px;top:377.64px;font-size:8.0px;color:#555;-webkit-text-stroke:0.1px #555;transform:scaleX(0.9410);transform-origin:0 0;">development through sales.</div>
<div class="a" style="left:319.3px;top:389.90px;width:2.3px;height:2.3px;border-radius:50%;background:#333"></div>
<div class="t" id="k63255dc696" style="left:332.50px;top:387.64px;font-size:8.0px;color:#555;-webkit-text-stroke:0.1px #555;transform:scaleX(0.9231);transform-origin:0 0;">Oversee the wide-reaching advertising initiatives, and direct the marketing research.</div>
<div class="a" style="left:319.3px;top:399.80px;width:2.3px;height:2.3px;border-radius:50%;background:#333"></div>
<div class="t" id="k115fb61355" style="left:332.50px;top:397.54px;font-size:8.0px;color:#555;-webkit-text-stroke:0.1px #555;transform:scaleX(0.9218);transform-origin:0 0;">Supervise all activities related to the brand.</div>
<div class="t" id="k73c0ce7b3e" style="left:306.20px;top:415.51px;font-size:7.1px;color:#404040;font-weight:bold;transform:scaleX(0.9289);transform-origin:0 0;">SEPT &rsquo;12 &ndash; JAN &rsquo;15</div>
<div class="t" id="k10caf1f669" style="left:306.20px;top:424.41px;font-size:9.4px;color:#505050;-webkit-text-stroke:0.15px currentColor;transform:scaleX(0.8372);transform-origin:0 0;"><b style="color:#2e7a4e">BRAND MANAGER,</b> FIRST UP CONSULTANTS &ndash; SEATTLE WA</div>
<div class="a" style="left:319.3px;top:440.40px;width:2.3px;height:2.3px;border-radius:50%;background:#333"></div>
<div class="t" id="ke38a4d3e56" style="left:332.50px;top:438.14px;font-size:8.0px;color:#555;-webkit-text-stroke:0.1px #555;transform:scaleX(0.9222);transform-origin:0 0;">Planned, developed and aided in marketing efforts for various brands and products.</div>
<div class="a" style="left:319.3px;top:450.70px;width:2.3px;height:2.3px;border-radius:50%;background:#333"></div>
<div class="t" id="k2dc4d1b459" style="left:332.50px;top:448.44px;font-size:8.0px;color:#555;-webkit-text-stroke:0.1px #555;transform:scaleX(0.9285);transform-origin:0 0;">Created strategies to take advantage of market opportunities.</div>
<div class="a" style="left:319.3px;top:461.00px;width:2.3px;height:2.3px;border-radius:50%;background:#333"></div>
<div class="t" id="ka17ac6aed8" style="left:332.50px;top:458.74px;font-size:8.0px;color:#555;-webkit-text-stroke:0.1px #555;transform:scaleX(0.9165);transform-origin:0 0;">Conceptualized strategic initiatives and implemented details of large-scale campaigns.</div>
<div class="t" id="k178c8febf6" style="left:306.20px;top:478.81px;font-size:7.1px;color:#404040;font-weight:bold;transform:scaleX(0.9502);transform-origin:0 0;">JUN &rsquo;11 &ndash; SEPT &rsquo;12</div>
<div class="t" id="k6d5b7bd64d" style="left:306.20px;top:487.71px;font-size:9.4px;color:#505050;-webkit-text-stroke:0.15px currentColor;transform:scaleX(0.8259);transform-origin:0 0;"><b style="color:#2e7a4e">ASSISTANT ACCOUNT EXECUTIVE,</b> FIRST UP CONSULTANTS &ndash; SEATTLE WA</div>
<div class="a" style="left:319.3px;top:504.10px;width:2.3px;height:2.3px;border-radius:50%;background:#333"></div>
<div class="t" id="k5ce59e5549" style="left:332.50px;top:501.84px;font-size:8.0px;color:#555;-webkit-text-stroke:0.1px #555;transform:scaleX(0.9263);transform-origin:0 0;">Met with clients to discuss and identify their advertising needs and goals.</div>
<div class="a" style="left:319.3px;top:514.40px;width:2.3px;height:2.3px;border-radius:50%;background:#333"></div>
<div class="t" id="k6cbab4c482" style="left:332.50px;top:512.14px;font-size:8.0px;color:#555;-webkit-text-stroke:0.1px #555;transform:scaleX(0.9087);transform-origin:0 0;">Collaborated with agency colleagues to devise large and small-scale campaigns that met</div>
<div class="t" id="k17e1202891" style="left:332.50px;top:522.04px;font-size:8.0px;color:#555;-webkit-text-stroke:0.1px #555;transform:scaleX(0.9377);transform-origin:0 0;">the client&rsquo;s brief and budget.</div>
<div class="t" id="k7a7bbe5696" style="left:64.30px;top:535.77px;font-size:6.6px;color:#464646;transform:scaleX(0.9444);transform-origin:0 0;">Page 1 of 1</div>
<div class="t" id="k252bd3e2c9" style="left:113.00px;top:535.77px;font-size:6.6px;color:#464646;transform:scaleX(0.9515);transform-origin:0 0;">205 words</div>
<svg class="a" style="left:158px;top:533.5px" width="11" height="10" viewBox="0 0 11 10"><rect x="0.6" y="0.6" width="9.5" height="8.5" fill="none" stroke="#777" stroke-width="0.9"/><path d="M5.3 0.6v8.5" stroke="#777" stroke-width="0.9"/><path d="M6.5 4.5l1.2 1.3 2-2.5" fill="none" stroke="#777" stroke-width="0.8"/></svg>
<svg class="a" style="left:186.5px;top:533.5px" width="11" height="10" viewBox="0 0 11 10"><rect x="0.6" y="3" width="9.5" height="6.2" fill="none" stroke="#777" stroke-width="0.9"/><circle cx="3" cy="1.6" r="1.2" fill="#555"/><rect x="5" y="0.5" width="4.5" height="2.2" fill="#555"/><path d="M2.5 5.5h6M2.5 7.5h6" stroke="#999" stroke-width="0.7"/></svg>
<svg class="a" style="left:673.5px;top:533.5px" width="12" height="10" viewBox="0 0 12 10"><path d="M0.6 0.8h4.5l1 1 1-1h4.3v8h-4.3l-1 0.8-1-0.8h-4.5z" fill="none" stroke="#777" stroke-width="0.9"/><path d="M6.1 1.8v7.5" stroke="#777" stroke-width="0.8"/></svg>
<div class="a" style="left:692.5px;top:530px;width:24px;height:17px;background:#d4d4d4"></div>
<svg class="a" style="left:699px;top:533px" width="11" height="11" viewBox="0 0 11 11"><rect x="0.6" y="0.6" width="9.5" height="9.5" fill="none" stroke="#777" stroke-width="0.9"/><path d="M2.5 3h5.5M2.5 5h5.5M2.5 7h5.5" stroke="#999" stroke-width="0.8"/></svg>
<svg class="a" style="left:724.5px;top:533px" width="12" height="11" viewBox="0 0 12 11"><rect x="0.6" y="0.6" width="9" height="8" fill="none" stroke="#777" stroke-width="0.9"/><path d="M0.6 2.6h9M2.3 4.8h4M2.3 6.6h3" stroke="#888" stroke-width="0.8"/><circle cx="9" cy="8.5" r="2.3" fill="#666"/></svg>
<div class="a" style="left:745px;top:537.8px;width:3.5px;height:1px;background:#555"></div>
<div class="a" style="left:751px;top:538px;width:54px;height:0.8px;background:#c0c0c0"></div>
<div class="a" style="left:778.5px;top:535px;width:2px;height:6.5px;background:#555"></div>
<div class="a" style="left:807.3px;top:537.8px;width:4px;height:1px;background:#555"></div>
<div class="a" style="left:808.8px;top:536.3px;width:1px;height:4px;background:#555"></div>
<div class="t" id="k73c1efbac7" style="left:820.80px;top:535.57px;font-size:6.6px;color:#464646;transform:scaleX(0.8687);transform-origin:0 0;">122%</div>
<div class="a" style="left:58px;top:547px;width:784px;height:24px;background:#101010"></div>
<svg class="a" style="left:65.5px;top:553.5px" width="10" height="9" viewBox="0 0 10 9"><path d="M0 1.2l4.2-0.6v3.6h-4.2zM4.9 0.5l5-0.5v4.2h-5zM0 4.9h4.2v3.6l-4.2-0.6zM4.9 4.9h5v4.2l-5-0.6z" fill="#fff"/></svg>
<div class="a" style="left:83.7px;top:548px;width:187px;height:19.8px;background:#373737"></div>
<div class="a" style="left:88.6px;top:552.6px;width:11.4px;height:11.4px;border-radius:50%;border:1.6px solid #f0f0f0"></div>
<div class="t" id="ke471b265f6" style="left:105.00px;top:554.45px;font-size:7.6px;color:#a8a8a8;transform:scaleX(1.0823);transform-origin:0 0;">Ask me anything</div>
<svg class="a" style="left:256px;top:553px" width="6" height="11" viewBox="0 0 6 11"><rect x="1.2" y="0.5" width="3.6" height="6.5" rx="1.8" fill="#bbb"/><path d="M0.5 5.5q0 2.8 2.5 2.8t2.5-2.8M3 8.3v2" fill="none" stroke="#bbb" stroke-width="0.8"/></svg>
<svg class="a" style="left:277.5px;top:553.5px" width="13" height="9" viewBox="0 0 13 9"><rect x="2.5" y="0.5" width="8" height="8" rx="0.5" fill="none" stroke="#ddd" stroke-width="1"/><path d="M0.5 2v5M12.5 2v5" stroke="#ddd" stroke-width="1"/></svg>
<svg class="a" style="left:303.5px;top:551px" width="14" height="14" viewBox="0 0 14 14"><path d="M1.5 8.2q0.2-6.5 6-6.7 5.3 0 5.5 5.6v1.2h-8.3q0.3 3 3.5 3.1 2.5 0 4.3-1.1v2.6q-2 1-4.7 1-6.1 0-6.3-5.7z M4.8 6.3h5.1q-0.2-2.5-2.5-2.5-2.2 0-2.6 2.5z" fill="#3b7ccb" fill-rule="evenodd"/></svg>
<svg class="a" style="left:329px;top:551px" width="16" height="14" viewBox="0 0 16 14"><path d="M0.5 1.5h5.5l1.5 1.5h8v10.5h-15z" fill="#f6d27a"/><path d="M0.5 4.5h15v9h-15z" fill="#fbe0a0"/><path d="M4 8.5h8v5h-2.5v-2.5h-3v2.5h-2.5z" fill="#3d85c6"/></svg>
<svg class="a" style="left:356.5px;top:551px" width="13" height="15" viewBox="0 0 13 15"><path d="M4 4v-1.5a2.5 2.5 0 0 1 5 0v1.5" fill="none" stroke="#fff" stroke-width="1.1"/><path d="M0.5 4h12v10.5h-12z" fill="#fff"/><path d="M3.5 7h2.5v2.5h-2.5zM7 7h2.5v2.5h-2.5zM3.5 10.5h2.5v2.5h-2.5zM7 10.5h2.5v2.5h-2.5z" fill="#101010"/></svg>
<div class="a" style="left:376.2px;top:547px;width:26.3px;height:22px;background:#3a3a3a"></div>
<div class="a" style="left:376.2px;top:568px;width:26.3px;height:1px;background:#7a8cc0"></div>
<svg class="a" style="left:381.5px;top:552.5px" width="14" height="12" viewBox="0 0 14 12"><rect x="4.5" y="0.5" width="9" height="11" fill="#e8eef8"/><path d="M6.5 3h5M6.5 5h5M6.5 7h5M6.5 9h5" stroke="#7ea3d8" stroke-width="0.8"/><path d="M0 1.5l8-1.3v11.6l-8-1.3z" fill="#2b5aa8"/><text x="0.9" y="8.2" font-family="Liberation Sans" font-weight="bold" font-size="6" fill="#fff">W</text></svg>
<svg class="a" style="left:702.5px;top:555.5px" width="7" height="4" viewBox="0 0 7 4"><path d="M0.5 3.5l3-3 3 3" fill="none" stroke="#eee" stroke-width="1"/></svg>
<svg class="a" style="left:718.5px;top:555.5px" width="10" height="5" viewBox="0 0 10 5"><rect x="0.5" y="0.5" width="8" height="4" fill="#eee"/><rect x="8.5" y="1.5" width="1" height="2" fill="#eee"/></svg>
<svg class="a" style="left:737.5px;top:553px" width="8" height="8" viewBox="0 0 8 8"><path d="M0.5 7.5l7-7v7z" fill="#666"/><path d="M3 7.5l4.5-4.5v4.5z" fill="#ccc"/></svg>
<svg class="a" style="left:752.5px;top:553px" width="10" height="10" viewBox="0 0 10 10"><path d="M0.5 3.5h2l3-3v9l-3-3h-2z" fill="none" stroke="#eee" stroke-width="0.9"/><path d="M7 3q1 2 0 4M8.5 1.8q1.8 3.2 0 6.4" fill="none" stroke="#eee" stroke-width="0.8"/></svg>
<svg class="a" style="left:771px;top:552.5px" width="10" height="11" viewBox="0 0 10 11"><path d="M1 10l3.5-3.5M4 6.5l4.5-5.5 1 1-5.5 4.5zM1.5 7.5q-1.5 2 0.5 2.5" fill="none" stroke="#eee" stroke-width="1"/></svg>
<div class="t" id="k9aa17c63c2" style="left:791.90px;top:551.67px;font-size:6.6px;color:#eee;transform:scaleX(0.9374);transform-origin:0 0;">11:20 AM</div>
<div class="t" id="k432058dfda" style="left:789.80px;top:560.47px;font-size:6.6px;color:#eee;transform:scaleX(0.9153);transform-origin:0 0;">11/23/2017</div>
<svg class="a" style="left:827.5px;top:553px" width="10" height="10" viewBox="0 0 10 10"><path d="M0.5 0.5h9v7h-3.5l-1.5 1.8-1.5-1.8h-2.5z" fill="none" stroke="#eee" stroke-width="0.9"/></svg>
<div class="a" style="left:841px;top:549px;width:1px;height:20px;background:#707070"></div>

</div></div>
</body></html>
